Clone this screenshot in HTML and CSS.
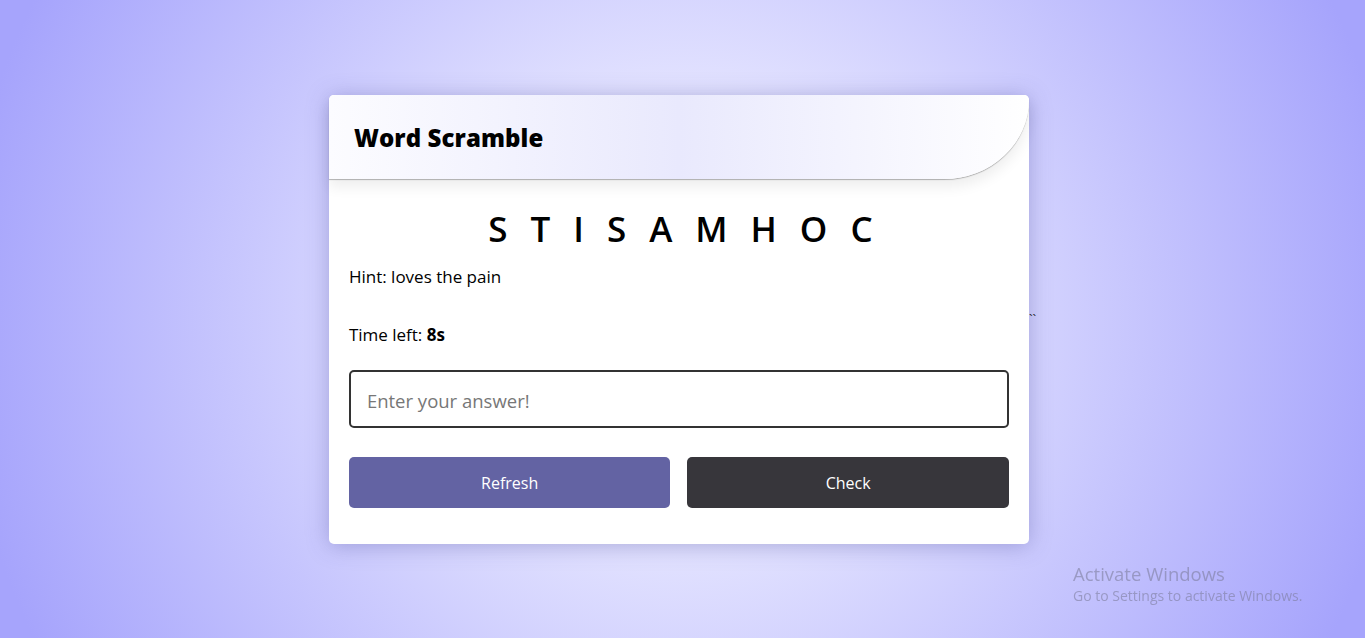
FILE: index.html
```html
<!DOCTYPE html>
<html lang="en">
<head>
<meta charset="utf-8">
<title>Word Scramble</title>
<link rel="stylesheet" href="styles.css">
</head>
<body>
  <div class="card">
    <header class="card-header">
      <h1 class="title">Word Scramble</h1>
    </header>
    <div class="content">
      <p class="word">STISAMHOC</p>
      <div class="details">
        <p class="hint">Hint: <span>loves the pain</span></p>
        <p class="time">Time left: <b>8s</b></p>
      </div>
      <input class="answer" type="text" placeholder="Enter your answer!">
      <div class="buttons">
        <button class="btn btn-refresh">Refresh</button>
        <button class="btn btn-check">Check</button>
      </div>
    </div>
  </div>``
  <div class="watermark">
    <div class="wm-title">Activate Windows</div>
    <div class="wm-sub">Go to Settings to activate Windows.</div>
  </div>
</body>
</html>
```

FILE: styles.css
```css
* { box-sizing: border-box; }
html, body { height: 100%; }
body {
  margin: 0;
  min-height: 100vh;
  display: flex;
  align-items: center;
  justify-content: center;
  font-family: "Open Sans", "Noto Sans", sans-serif;
  color: #1a1a1a;
  background: radial-gradient(circle at 50% 50%, #e6e6ff 26%, #a6a4fc 96%);
  font-size: 13px;
  overflow: hidden;
}
.card {
  width: 700px;
  background: #fff;
  border-radius: 5px;
  box-shadow: 0 2px 22px rgba(70, 68, 150, 0.35);
}
.card-header {
  height: 84px;
  display: flex;
  align-items: center;
  padding: 0 25px;
  background: linear-gradient(90deg, #fcfcff 0%, #e9e9fd 50%, #ffffff 100%);
  border-radius: 5px 5px 90px 0 / 5px 5px 84px 0;
  box-shadow: 0 1px 1px rgba(0, 0, 0, 0.28), 0 8px 14px rgba(0, 0, 0, 0.07);
}
.title {
  margin: 0;
  font-size: 24px;
  font-weight: 800;
  color: #000;
  letter-spacing: 0.1px;
  padding-top: 2px;
}
.content {
  padding: 25px 20px 36px;
}
.word {
  margin: 0;
  font-size: 35px;
  line-height: 49px;
  font-weight: 600;
  letter-spacing: 23px;
  text-align: center;
  padding-left: 26px;
  color: #000;
}
.details p {
  margin: 0;
  font-size: 17px;
  line-height: 23px;
  color: #000;
}
.hint { margin-top: 12px !important; }
.time { margin-top: 35px !important; }
.time b { font-weight: 700; }
.answer {
  display: block;
  width: 100%;
  height: 58px;
  margin-top: 24px;
  border: 2px solid #333;
  border-radius: 5px;
  padding: 3px 16px 0;
  font-family: "Open Sans", "Noto Sans", sans-serif;
  font-size: 18.5px;
  outline: none;
  color: #222;
}
.answer::placeholder { color: #777; }
.buttons {
  display: flex;
  gap: 17px;
  margin-top: 29px;
}
.btn {
  flex: 1;
  height: 51px;
  border: none;
  border-radius: 5px;
  padding-top: 3px;
  color: #fff;
  font-family: "Open Sans", "Noto Sans", sans-serif;
  font-size: 16px;
  cursor: pointer;
}
.btn-refresh { background: #6363a3; }
.btn-check { background: #37363b; }
.watermark {
  position: fixed;
  left: 1073px;
  top: 563px;
  color: rgba(120, 120, 150, 0.55);
  font-family: "Open Sans", "Noto Sans", sans-serif;
}
.wm-title { font-size: 18.5px; line-height: 22px; }
.wm-sub { font-size: 14px; line-height: 21px; }
```
